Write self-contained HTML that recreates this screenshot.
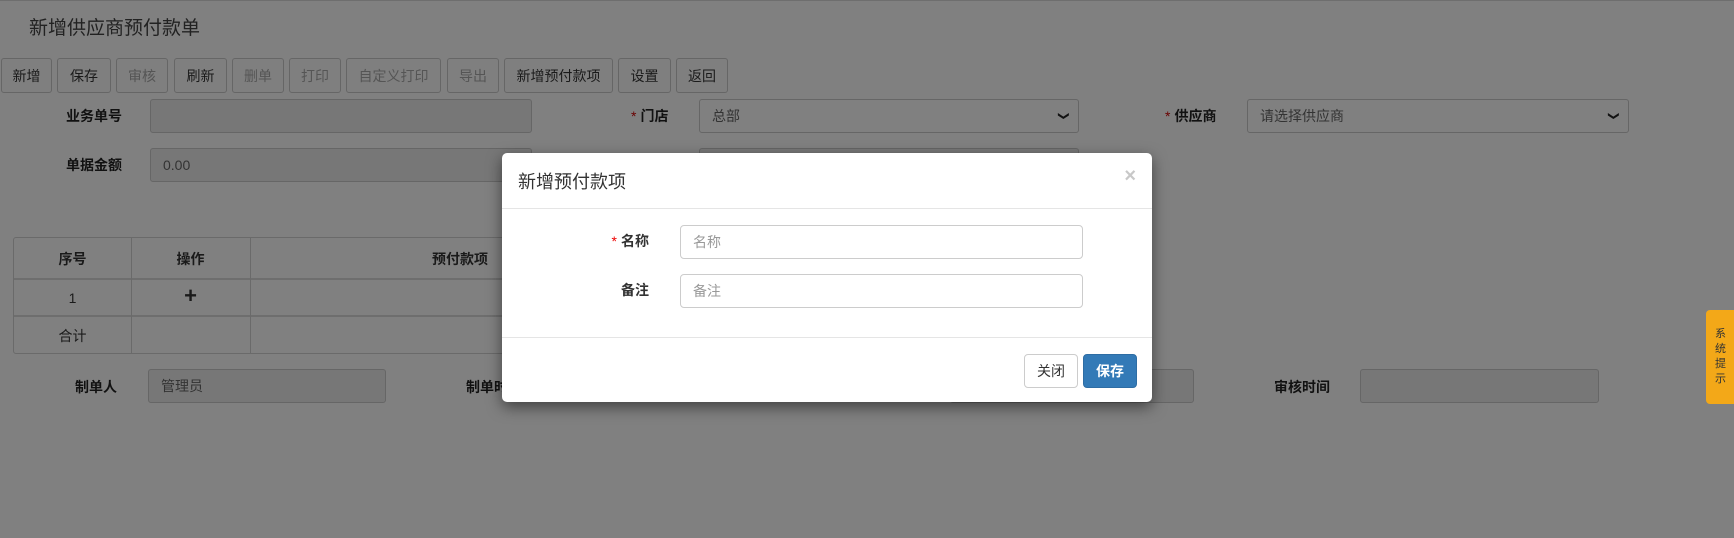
<!DOCTYPE html>
<html><head><meta charset="utf-8"><style>
*{box-sizing:border-box;margin:0;padding:0}
body{width:1734px;height:538px;background:#808080;position:relative;overflow:hidden;font-family:"Liberation Sans","Noto Sans CJK SC",sans-serif;font-size:14px;color:#1a1a1a}
.a{position:absolute}
.btn{position:absolute;top:58px;height:35px;border:1px solid #666;border-radius:3px;background:#7f7f7f;display:flex;align-items:center;justify-content:center;font-size:14px;color:#1a1a1a}
.btn.d{color:#555}
.lab{position:absolute;font-weight:bold;font-size:14px;color:#111;line-height:20px}
.st{color:#6a0000;font-weight:normal;margin-right:4px}
.inp{position:absolute;height:34px;border:1px solid #666;border-radius:3px;background:#777;padding-left:12px;line-height:32px;color:#333}
.sel{background:#808080}
.chev{position:absolute;right:10px;top:0;font-size:11px;color:#111;transform:rotate(90deg)}
.tb{position:absolute;left:13px;top:237px;width:1040px;height:117px;border:1px solid #6a6a6a;border-radius:3px}
.hl{position:absolute;left:0;right:0;height:2px;background:#6e6e6e}
.vl{position:absolute;top:0;bottom:0;width:1px;background:#6a6a6a}
.c{position:absolute;text-align:center;line-height:20px}
.modal{position:absolute;left:502px;top:153px;width:650px;height:249px;background:#fff;border-radius:5px;box-shadow:0 5px 15px rgba(0,0,0,.5)}
.mi{position:absolute;left:178px;width:403px;height:34px;border:1px solid #ccc;border-radius:4px;padding-left:12px;line-height:32px;color:#999;font-size:14px}
</style></head><body>
<div class="a" style="left:0;top:0;width:1734px;height:1px;background:#6e6e6e"></div>
<div class="a" style="left:29px;top:13px;font-size:19px;color:#222">新增供应商预付款单</div>

<div class="btn" style="left:1px;width:51px">新增</div>
<div class="btn" style="left:57px;width:54px">保存</div>
<div class="btn d" style="left:116px;width:52px">审核</div>
<div class="btn" style="left:174px;width:53px">刷新</div>
<div class="btn d" style="left:232px;width:52px">删单</div>
<div class="btn d" style="left:289px;width:52px">打印</div>
<div class="btn d" style="left:346px;width:95px">自定义打印</div>
<div class="btn d" style="left:447px;width:52px">导出</div>
<div class="btn" style="left:504px;width:109px">新增预付款项</div>
<div class="btn" style="left:618px;width:53px">设置</div>
<div class="btn" style="left:676px;width:52px">返回</div>

<div class="lab" style="left:66px;top:106px">业务单号</div>
<div class="inp" style="left:150px;top:99px;width:382px"></div>
<div class="lab" style="left:631px;top:106px"><span class="st">*</span>门店</div>
<div class="inp sel" style="left:699px;top:99px;width:380px">总部<span class="chev">&#10095;</span></div>
<div class="lab" style="left:1165px;top:106px"><span class="st">*</span>供应商</div>
<div class="inp sel" style="left:1247px;top:99px;width:382px">请选择供应商<span class="chev">&#10095;</span></div>

<div class="lab" style="left:66px;top:155px">单据金额</div>
<div class="inp" style="left:150px;top:148px;width:382px">0.00</div>
<div class="inp" style="left:699px;top:148px;width:380px"></div>

<div class="tb">
 <div class="hl" style="top:40px"></div><div class="hl" style="top:77px"></div>
 <div class="vl" style="left:117px"></div><div class="vl" style="left:236px"></div>
 <div class="c" style="left:0;width:117px;top:11px;font-weight:bold">序号</div>
 <div class="c" style="left:117px;width:119px;top:11px;font-weight:bold">操作</div>
 <div class="c" style="left:236px;width:420px;top:11px;font-weight:bold">预付款项</div>
 <div class="c" style="left:0;width:117px;top:50px">1</div>
 <div class="c" style="left:117px;width:119px;top:48px;font-size:22px;font-weight:bold">+</div>
 <div class="c" style="left:0;width:117px;top:88px">合计</div>
</div>

<div class="lab" style="left:75px;top:377px">制单人</div>
<div class="inp" style="left:148px;top:369px;width:238px">管理员</div>
<div class="lab" style="left:466px;top:377px">制单时间</div>
<div class="inp" style="left:950px;top:369px;width:244px"></div>
<div class="lab" style="left:1274px;top:377px">审核时间</div>
<div class="inp" style="left:1360px;top:369px;width:239px"></div>

<div class="a" style="left:1706px;top:310px;width:28px;height:94px;background:#f3a818;border-radius:4px 0 0 4px;font-size:11px;line-height:15px;color:#333;padding:17px 0 0 9px">系<br>统<br>提<br>示</div>

<div class="modal">
 <div class="a" style="left:16px;top:15px;font-size:18px;color:#333">新增预付款项</div>
 <div class="a" style="right:16px;top:12px;font-size:20px;font-weight:bold;color:#c8c8c8">×</div>
 <div class="a" style="left:0;right:0;top:55px;height:1px;background:#e5e5e5"></div>
 <div class="lab" style="right:503px;top:78px;color:#333"><span class="st" style="color:#e00">*</span>名称</div>
 <div class="mi" style="top:72px">名称</div>
 <div class="lab" style="right:503px;top:127px;color:#333">备注</div>
 <div class="mi" style="top:121px">备注</div>
 <div class="a" style="left:0;right:0;top:184px;height:1px;background:#e5e5e5"></div>
 <div class="a" style="left:522px;top:201px;width:54px;height:34px;border:1px solid #ccc;border-radius:4px;display:flex;align-items:center;justify-content:center;color:#333">关闭</div>
 <div class="a" style="left:581px;top:201px;width:54px;height:34px;background:#337ab7;border:1px solid #2e6da4;border-radius:4px;display:flex;align-items:center;justify-content:center;color:#fff;font-weight:bold">保存</div>
</div>
</body></html>
